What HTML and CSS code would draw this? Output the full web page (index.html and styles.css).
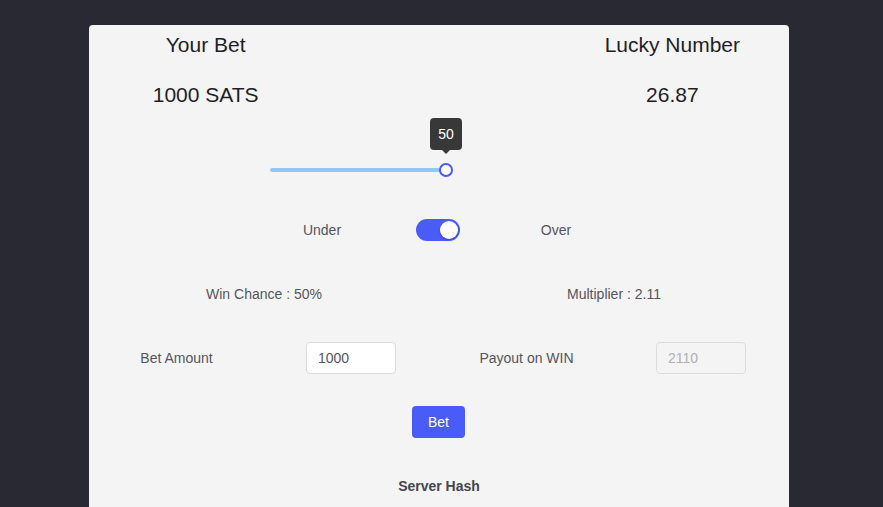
FILE: index.html
```html
<!DOCTYPE html>
<html>
<head>
<meta charset="utf-8">
<link rel="stylesheet" href="styles.css">
</head>
<body>
<div class="card">
  <div class="head-grid">
    <div class="title">Your Bet</div>
    <div></div>
    <div class="title">Lucky Number</div>
    <div class="value">1000 SATS</div>
    <div></div>
    <div class="value">26.87</div>
  </div>

  <div class="slider-row">
    <div class="slider">
      <div class="track-fill" style="width:50%"></div>
      <div class="thumb" style="left:50%">
        <div class="tip">50</div>
      </div>
    </div>
  </div>

  <div class="toggle-row">
    <div class="cell label">Under</div>
    <div class="cell"><div class="switch"><div class="knob"></div></div></div>
    <div class="cell label">Over</div>
  </div>

  <div class="stats-row">
    <div class="label">Win Chance : 50%</div>
    <div class="label">Multiplier : 2.11</div>
  </div>

  <div class="amount-row">
    <div class="label">Bet Amount</div>
    <div><input class="field" type="text" value="1000"></div>
    <div class="label">Payout on WIN</div>
    <div><input class="field disabled" type="text" value="2110" disabled></div>
  </div>

  <div class="btn-row">
    <button class="bet-btn">Bet</button>
  </div>

  <div class="hash">Server Hash</div>
</div>
</body>
</html>
```

FILE: styles.css
```css
html, body {
  margin: 0;
  padding: 0;
  background: #292934;
  font-family: "Liberation Sans", Arial, sans-serif;
  height: 100%;
  overflow: hidden;
}
.card {
  width: 700px;
  margin: 25px 0 0 89px;
  background: #f4f4f4;
  border-radius: 4px;
  padding-top: 8px;
  min-height: 600px;
  box-sizing: border-box;
}
.head-grid {
  display: grid;
  grid-template-columns: repeat(3, 1fr);
  row-gap: 26px;
  text-align: center;
  color: #1e1e28;
}
.title, .value {
  font-size: 21px;
  line-height: 24px;
}
.slider-row {
  padding: 61px 0 0 181px;
  height: 4px;
}
.slider {
  position: relative;
  width: 352px;
  height: 4px;
}
.track-fill {
  height: 4px;
  background: #90c8f8;
  border-radius: 2px;
}
.thumb {
  position: absolute;
  top: -5px;
  width: 10px;
  height: 10px;
  margin-left: -7px;
  border: 2px solid #4a5cf7;
  border-radius: 50%;
  background: #fff;
}
.tip {
  position: absolute;
  left: 50%;
  bottom: 25px;
  transform: translateX(-50%);
  width: 32px;
  height: 32px;
  background: #383838;
  color: #fff;
  border-radius: 4px;
  font-size: 14px;
  line-height: 32px;
  text-align: center;
}
.tip::after {
  content: "";
  position: absolute;
  left: 50%;
  top: 32px;
  margin-left: -4px;
  border: 4px solid transparent;
  border-top-color: #383838;
  border-bottom: 0;
}
.toggle-row {
  margin-top: 47px;
  display: flex;
  justify-content: center;
  height: 22px;
}
.cell {
  width: 117px;
  display: flex;
  justify-content: center;
  align-items: center;
}
.label {
  font-size: 14px;
  color: #555560;
}
.switch {
  width: 44px;
  height: 22px;
  border-radius: 11px;
  background: #4a5cf7;
  position: relative;
  margin-left: -2px;
}
.knob {
  position: absolute;
  right: 2px;
  top: 2px;
  width: 18px;
  height: 18px;
  border-radius: 50%;
  background: #fff;
  box-shadow: 0 1px 2px rgba(0,0,0,0.25);
}
.stats-row {
  margin-top: 44px;
  display: grid;
  grid-template-columns: 1fr 1fr;
  text-align: center;
  line-height: 18px;
}
.amount-row {
  margin-top: 39px;
  display: grid;
  grid-template-columns: repeat(4, 1fr);
  align-items: center;
  justify-items: center;
  height: 32px;
}
.field {
  width: 90px;
  height: 32px;
  box-sizing: border-box;
  border: 1px solid #dcdcdc;
  border-radius: 4px;
  background: #fff;
  padding: 0 11px;
  font-family: "Liberation Sans", Arial, sans-serif;
  font-size: 14px;
  color: #555560;
  outline: none;
  margin-left: -1px;
}
.field.disabled {
  background: #f4f4f4;
  color: #b0b0b0;
  -webkit-text-fill-color: #b0b0b0;
}
.btn-row {
  margin-top: 32px;
  display: flex;
  justify-content: center;
}
.bet-btn {
  width: 53px;
  height: 32px;
  border: none;
  border-radius: 4px;
  background: #4a5cf7;
  color: #fff;
  font-family: "Liberation Sans", Arial, sans-serif;
  font-size: 14px;
  margin-left: -1px;
}
.hash {
  margin-top: 39px;
  text-align: center;
  font-size: 14px;
  font-weight: bold;
  line-height: 18px;
  color: #45454f;
}
```
